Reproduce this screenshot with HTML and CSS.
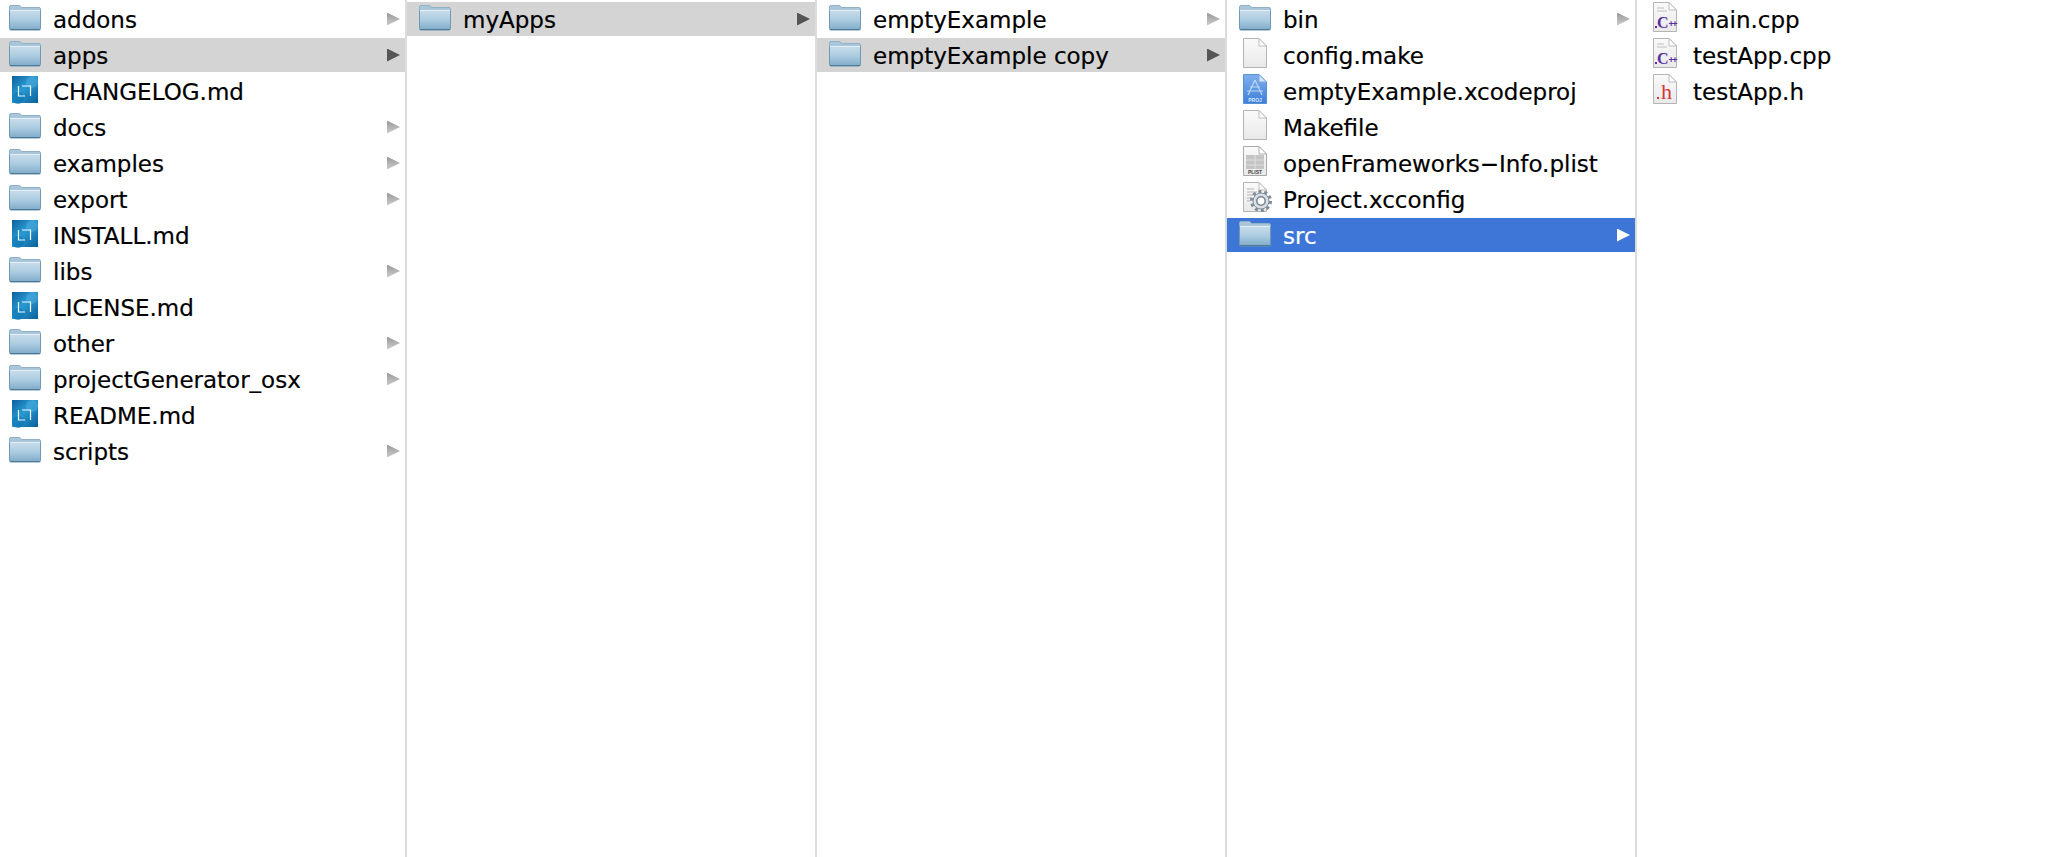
FILE: index.html
```html
<!DOCTYPE html>
<html lang="en">
  <head>
    <title>Finder columns</title>
    <meta charset="utf-8" />
    <link rel="stylesheet" href="styles.css">
  </head>
  <body>
    <svg class="sprites" width="0" height="0" aria-hidden="true">
      <defs>
        <linearGradient id="folderFill" x1="0" y1="0" x2="0" y2="1">
          <stop offset="0" stop-color="#c8dcea" />
          <stop offset="0.5" stop-color="#abcbe0" />
          <stop offset="1" stop-color="#7eaac8" />
        </linearGradient>
        <linearGradient id="pageFill" x1="0" y1="0" x2="0" y2="1">
          <stop offset="0" stop-color="#fafafa" />
          <stop offset="1" stop-color="#e9e9e9" />
        </linearGradient>
        <linearGradient id="appFill" x1="0" y1="0" x2="0" y2="1">
          <stop offset="0" stop-color="#7fb0ee" />
          <stop offset="1" stop-color="#3f7fd8" />
        </linearGradient>
        <linearGradient id="mdFill" x1="0" y1="0" x2="1" y2="1">
          <stop offset="0" stop-color="#0c5f9e" />
          <stop offset="0.45" stop-color="#2a9ad2" />
          <stop offset="1" stop-color="#0a5f9a" />
        </linearGradient>

        <symbol id="folder" viewBox="0 0 34 34">
          <path d="M1.5 7 V5 Q1.5 3.5 3 3.5 H11 Q12.5 3.5 13.5 5.5 H31 Q32.5 5.5 32.5 7 V9 H1.5 Z" fill="#a9c6da" stroke="#8fb0c6" />
          <path d="M1.5 8.5 H32.5 V26.5 Q32.5 28 31 28 H3 Q1.5 28 1.5 26.5 Z" fill="url(#folderFill)" stroke="#6f98b3" />
          <path d="M2 8.5 H32" stroke="#e4f0f7" />
          <path d="M2 27.5 H32" stroke="#4f7a96" />
        </symbol>

        <symbol id="page" viewBox="0 0 34 34">
          <path d="M5.5 .5 H21 L28.5 8 V29.5 H5.5 Z" fill="url(#pageFill)" stroke="#b4b4b4" />
          <path d="M21 .5 V8 H28.5 Z" fill="#fff" stroke="#bcbcbc" />
        </symbol>

        <symbol id="md" viewBox="0 0 34 34">
          <rect x="4" y="2" width="26" height="27" fill="url(#mdFill)" />
          <circle cx="24" cy="8" r="6" fill="#4aa8dc" opacity=".6" />
          <circle cx="10" cy="24" r="6" fill="#0f79b5" opacity=".7" />
          <path d="M10.5 12 V22 H17 M14 12 H22.5 V22" fill="none" stroke="#eef8fd" stroke-width="1.2" />
        </symbol>

        <symbol id="xcode" viewBox="0 0 34 34">
          <path d="M5.5 .5 H21 L28.5 8 V29.5 H5.5 Z" fill="url(#appFill)" stroke="#5b8fd4" />
          <path d="M21 .5 V8 H28.5 Z" fill="#d5e5f9" stroke="#7fa6dc" />
          <path d="M17 6 L10 21 M17 6 L24 21 M9 17 H25 M12 13 H22" fill="none" stroke="#bcd5f5" stroke-width="1.2" />
          <text class="tag" x="17" y="27.5" fill="#d8e7fa">PROJ</text>
        </symbol>

        <symbol id="plist" viewBox="0 0 34 34">
          <path d="M5.5 .5 H21 L28.5 8 V29.5 H5.5 Z" fill="url(#pageFill)" stroke="#a8a8a8" />
          <path d="M21 .5 V8 H28.5 Z" fill="#fff" stroke="#b0b0b0" />
          <rect x="8" y="9" width="18" height="14" fill="#c4c4c4" />
          <path d="M17 9 V23 M8 14 H26 M8 19 H26" stroke="#dedede" />
          <text class="tag" x="17" y="28.3" fill="#444">PLIST</text>
        </symbol>

        <symbol id="config" viewBox="0 0 34 34">
          <path d="M5.5 .5 H21 L28.5 8 V29.5 H5.5 Z" fill="url(#pageFill)" stroke="#b4b4b4" />
          <path d="M21 .5 V8 H28.5 Z" fill="#fff" stroke="#bcbcbc" />
          <path d="M9 7 H16 M9 10 H19 M9 13 H15 M9 16 H13 M9 19 H12" stroke="#b5b5b5" />
          <circle cx="23" cy="19" r="9.2" fill="none" stroke="#7f8c99" stroke-width="3.6" stroke-dasharray="3 2.78" />
          <circle cx="23" cy="19" r="8" fill="#d9dfe5" stroke="#8591a0" />
          <circle cx="23" cy="19" r="4.2" fill="#fff" stroke="#76838f" stroke-width="1.5" />
        </symbol>

        <symbol id="cpp" viewBox="0 0 34 34">
          <path d="M5.5 .5 H21 L28.5 8 V29.5 H5.5 Z" fill="url(#pageFill)" stroke="#b4b4b4" />
          <path d="M21 .5 V8 H28.5 Z" fill="#fff" stroke="#bcbcbc" />
          <path d="M9 6 H16 M9 9 H19" stroke="#c0c0c0" />
          <text class="big" x="9" y="26" fill="#5a2fa0">C</text>
          <text class="plus" x="20.5" y="25" fill="#5a2fa0">++</text>
          <rect x="7" y="24" width="2" height="2" fill="#5a2fa0" />
        </symbol>

        <symbol id="header" viewBox="0 0 34 34">
          <path d="M5.5 .5 H21 L28.5 8 V29.5 H5.5 Z" fill="url(#pageFill)" stroke="#b4b4b4" />
          <path d="M21 .5 V8 H28.5 Z" fill="#fff" stroke="#bcbcbc" />
          <text class="tall" x="13" y="25" fill="#cf3a3a">h</text>
          <rect x="9" y="23" width="2" height="2" fill="#cf3a3a" />
        </symbol>
      </defs>
    </svg>

    <main class="browser">
      <ul class="col">
        <li class="row"><svg class="icon"><use href="#folder" /></svg><span class="name">addons</span><i class="arrow"></i></li>
        <li class="row open"><svg class="icon"><use href="#folder" /></svg><span class="name">apps</span><i class="arrow"></i></li>
        <li class="row"><svg class="icon"><use href="#md" /></svg><span class="name">CHANGELOG.md</span></li>
        <li class="row"><svg class="icon"><use href="#folder" /></svg><span class="name">docs</span><i class="arrow"></i></li>
        <li class="row"><svg class="icon"><use href="#folder" /></svg><span class="name">examples</span><i class="arrow"></i></li>
        <li class="row"><svg class="icon"><use href="#folder" /></svg><span class="name">export</span><i class="arrow"></i></li>
        <li class="row"><svg class="icon"><use href="#md" /></svg><span class="name">INSTALL.md</span></li>
        <li class="row"><svg class="icon"><use href="#folder" /></svg><span class="name">libs</span><i class="arrow"></i></li>
        <li class="row"><svg class="icon"><use href="#md" /></svg><span class="name">LICENSE.md</span></li>
        <li class="row"><svg class="icon"><use href="#folder" /></svg><span class="name">other</span><i class="arrow"></i></li>
        <li class="row"><svg class="icon"><use href="#folder" /></svg><span class="name">projectGenerator_osx</span><i class="arrow"></i></li>
        <li class="row"><svg class="icon"><use href="#md" /></svg><span class="name">README.md</span></li>
        <li class="row"><svg class="icon"><use href="#folder" /></svg><span class="name">scripts</span><i class="arrow"></i></li>
      </ul>
      <ul class="col">
        <li class="row open"><svg class="icon"><use href="#folder" /></svg><span class="name">myApps</span><i class="arrow"></i></li>
      </ul>
      <ul class="col">
        <li class="row"><svg class="icon"><use href="#folder" /></svg><span class="name">emptyExample</span><i class="arrow"></i></li>
        <li class="row open"><svg class="icon"><use href="#folder" /></svg><span class="name">emptyExample copy</span><i class="arrow"></i></li>
      </ul>
      <ul class="col">
        <li class="row"><svg class="icon"><use href="#folder" /></svg><span class="name">bin</span><i class="arrow"></i></li>
        <li class="row"><svg class="icon"><use href="#page" /></svg><span class="name">config.make</span></li>
        <li class="row"><svg class="icon"><use href="#xcode" /></svg><span class="name">emptyExample.xcodeproj</span></li>
        <li class="row"><svg class="icon"><use href="#page" /></svg><span class="name">Makefile</span></li>
        <li class="row"><svg class="icon"><use href="#plist" /></svg><span class="name">openFrameworks&#8722;Info.plist</span></li>
        <li class="row"><svg class="icon"><use href="#config" /></svg><span class="name">Project.xcconfig</span></li>
        <li class="row active"><svg class="icon"><use href="#folder" /></svg><span class="name">src</span><i class="arrow"></i></li>
      </ul>
      <ul class="col last">
        <li class="row"><svg class="icon"><use href="#cpp" /></svg><span class="name">main.cpp</span></li>
        <li class="row"><svg class="icon"><use href="#cpp" /></svg><span class="name">testApp.cpp</span></li>
        <li class="row"><svg class="icon"><use href="#header" /></svg><span class="name">testApp.h</span></li>
      </ul>
    </main>
  </body>
</html>
```

FILE: styles.css
```css
html, body {
  margin: 0;
  height: 100%;
  background: #fff;
  overflow: hidden;
}

.sprites {
  position: absolute;
}

.tag {
  font: bold 5px "Liberation Sans", sans-serif;
  text-anchor: middle;
}

.big {
  font: bold 16px "Liberation Serif", serif;
}

.tall {
  font: 22px "Liberation Serif", serif;
}

.plus {
  font: bold 9px "Liberation Sans", sans-serif;
  letter-spacing: -1.5px;
}

.browser {
  display: flex;
  height: 100%;
  margin-left: -3px;
  font-family: "DejaVu Sans", sans-serif;
  font-size: 23px;
  color: #000;
}

.col {
  flex: 0 0 408px;
  margin: 0;
  padding: 2px 0 0;
  list-style: none;
  border-right: 2px solid #dcdcdc;
}

.col.last {
  flex: 1;
  border-right: 0;
}

.row {
  display: flex;
  align-items: center;
  height: 34px;
  margin-bottom: 2px;
  padding: 0 5px 0 11px;
}

.row.open {
  background: #d4d4d4;
}

.row.active {
  background: #3d76d6;
  color: #fff;
}

.icon {
  flex: none;
  width: 34px;
  height: 34px;
  margin-right: 11px;
}

.name {
  padding-top: 1px;
  white-space: nowrap;
  -webkit-text-stroke: 0.2px currentColor;
}

.arrow {
  width: 13px;
  height: 13px;
  margin-left: auto;
  clip-path: polygon(0 0, 100% 50%, 0 100%);
  background: linear-gradient(#9a9a9a, #cfcfcf);
}

.row.open .arrow {
  background: #555;
}

.row.active .arrow {
  background: #fff;
}
```
